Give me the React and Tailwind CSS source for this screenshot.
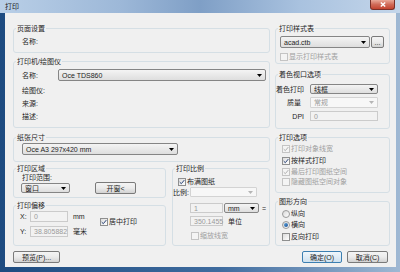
import React from "react";

/**
 * Print dialog (AutoCAD style, Windows 7 Aero frame)
 */

const Arrow = ({ disabled }) => (
  <svg width="5" height="3" viewBox="0 0 5 3" className="shrink-0">
    <polygon points="0,0 5,0 2.5,3" fill={disabled ? "#b5b5b5" : "#000"} />
  </svg>
);

const Check = ({ checked, disabled }) => (
  <span
    className={`flex h-[8px] w-[8px] shrink-0 items-center justify-center border ${
      disabled
        ? "border-[#c4c4c4] bg-[#f4f4f4]"
        : "border-[#8e8f8f] bg-gradient-to-br from-[#dcdcdc] to-white"
    }`}
  >
    {checked && (
      <svg width="6" height="6" viewBox="0 0 6 6">
        <path
          d="M0.7 3.1 L2.3 4.7 L5.3 1.1"
          stroke={disabled ? "#b0b0b0" : "#2a4478"}
          strokeWidth="1"
          fill="none"
        />
      </svg>
    )}
  </span>
);

const Radio = ({ checked }) => (
  <span className="flex h-[8px] w-[8px] shrink-0 items-center justify-center rounded-full border border-[#9a9a9a] bg-gradient-to-br from-[#d8d8d8] to-white">
    {checked && <span className="h-[4px] w-[4px] rounded-full bg-gradient-to-br from-[#5ea6e0] to-[#1c4f91]" />}
  </span>
);

const Combo = ({ value, className = "" }) => (
  <div
    className={`flex items-center rounded-[2px] border border-[#858585] bg-gradient-to-b from-[#f4f4f4] to-[#dedede] pl-[3px] pr-[3px] ${className}`}
  >
    <span className="flex-1 whitespace-nowrap leading-none">{value}</span>
    <Arrow />
  </div>
);

const DisabledCombo = ({ value, className = "" }) => (
  <div
    className={`flex items-center rounded-[1px] border border-[#d3d3d3] bg-[#f7f7f7] pl-[3px] pr-[3px] text-[#9a9a9a] ${className}`}
  >
    <span className="flex-1 whitespace-nowrap leading-none">{value}</span>
    <Arrow disabled />
  </div>
);

const Field = ({ value, className = "" }) => (
  <div
    className={`flex items-center border border-[#cbcbcb] bg-[#f2f2f2] pl-[3px] text-[#9a9a9a] ${className}`}
  >
    <span className="whitespace-nowrap leading-none">{value}</span>
  </div>
);

const Button = ({ children, className = "", primary }) => (
  <button
    className={`flex h-[12px] items-center justify-center rounded-[2px] border bg-gradient-to-b leading-none ${
      primary
        ? "border-[#3c7fb1] from-[#f0f7fc] to-[#cfe1ef]"
        : "border-[#7a7a7a] from-[#f4f4f4] via-[#ebebeb] to-[#d2d2d2]"
    } ${className}`}
  >
    {children}
  </button>
);

const Group = ({ title, className = "", children }) => (
  <fieldset className={`min-w-0 rounded-[3px] border border-[#d5dfe5] ${className}`}>
    <legend className="ml-[2px] px-[1px] leading-[9px]">{title}</legend>
    {children}
  </fieldset>
);

const CheckRow = ({ label, checked, disabled, className = "" }) => (
  <div className={`flex h-[9px] items-center gap-[1px] ${className}`}>
    <Check checked={checked} disabled={disabled} />
    <span className={disabled ? "text-[#a0a0a0]" : ""}>{label}</span>
  </div>
);

export default function App() {
  return (
    <div className="flex h-[272px] w-[400px] flex-col bg-[linear-gradient(to_right,#1d4b80,#3f6c9f_55%,#9fb8d3)] font-['Liberation_Sans','Noto_Sans_CJK_SC',sans-serif] text-[7px] leading-[9px] text-[#1e1e1e]">
      {/* Title bar */}
      <div className="flex h-[13px] items-start bg-[linear-gradient(to_right,#b9cfe7,#9db8d8_30%,#7f9fc6_50%,#a9c2df_75%,#c4d6ea)]">
        <span className="ml-[5px] mt-[2px] flex-1 text-[#1a1a1a]">打印</span>
        <div className="mr-[5px] flex h-[10px] w-[25px] items-center justify-center rounded-b-[3px] border border-t-0 border-[#7a3028] bg-gradient-to-b from-[#e9a899] via-[#d06a58] to-[#c4432f]">
          <svg width="6" height="5" viewBox="0 0 6 5">
            <path d="M0.8 0.5 L5.2 4.5 M5.2 0.5 L0.8 4.5" stroke="#fff" strokeWidth="1.4" />
          </svg>
        </div>
      </div>

      <div className="flex">
        <div className="w-[5px]" />
        {/* Client area */}
        <div className="flex h-[254px] w-[391px] gap-[5px] bg-[#f0f0f0] pl-[8px] pt-[11px]">
          {/* Left column */}
          <div className="flex w-[257px] flex-col">
            <Group title="页面设置" className="h-[29px]">
              <div className="mt-[4px] pl-[8px]">名称:</div>
            </Group>

            <Group title="打印机/绘图仪" className="mt-[4px] h-[71px]">
              <div className="mt-[3px] flex items-center pl-[8px]">
                <span className="w-[36px]">名称:</span>
                <Combo value="Oce TDS860" className="h-[12px] w-[208px]" />
              </div>
              <div className="mt-[5px] pl-[8px]">绘图仪:</div>
              <div className="mt-[4px] pl-[8px]">来源:</div>
              <div className="mt-[4px] pl-[8px]">描述:</div>
            </Group>

            <Group title="纸张尺寸" className="mt-[5px] h-[29px]">
              <Combo value="Oce A3 297x420 mm" className="ml-[8px] mt-[1px] h-[12px] w-[156px]" />
            </Group>

            <div className="mt-[2px] flex gap-[6px]">
              <div className="flex w-[153px] flex-col">
                <Group title="打印区域" className="h-[34px]">
                  <div className="pl-[8px]">打印范围:</div>
                  <div className="flex h-[12px] items-center pl-[7px]">
                    <Combo value="窗口" className="h-[10px] w-[49px]" />
                    <Button className="ml-[25px] w-[41px]">开窗&lt;</Button>
                  </div>
                </Group>

                <Group title="打印偏移" className="mt-[3px] h-[45px]">
                  <div className="flex">
                    <div className="flex w-[86px] flex-col pl-[6px]">
                      <div className="mt-[1px] flex h-[11px] items-center">
                        <span className="w-[10px]">X:</span>
                        <Field value="0" className="h-[11px] w-[38px]" />
                        <span className="ml-[5px]">mm</span>
                      </div>
                      <div className="mt-[4px] flex h-[11px] items-center">
                        <span className="w-[10px]">Y:</span>
                        <Field value="38.805882" className="h-[11px] w-[38px]" />
                        <span className="ml-[5px]">毫米</span>
                      </div>
                    </div>
                    <CheckRow label="居中打印" checked className="mt-[7px]" />
                  </div>
                </Group>
              </div>

              <Group title="打印比例" className="h-[82px] w-[98px]">
                <CheckRow label="布满图纸" checked className="mt-[4px] pl-[5px]" />
                <div className="mt-[1px] flex h-[10px] items-center">
                  <span className="w-[17px] whitespace-nowrap">比例:</span>
                  <DisabledCombo value="" className="h-[10px] w-[67px]" />
                </div>
                <div className="mt-[6px] flex h-[10px] items-center pl-[17px]">
                  <Field value="1" className="h-[10px] w-[33px]" />
                  <Combo value="mm" className="ml-[1px] h-[10px] w-[35px]" />
                  <span className="ml-[3px]">=</span>
                </div>
                <div className="mt-[3px] flex h-[10px] items-center pl-[17px]">
                  <Field value="350.1455" className="h-[10px] w-[33px]" />
                  <span className="ml-[5px]">单位</span>
                </div>
                <CheckRow label="缩放线宽" disabled className="mt-[5px] pl-[18px]" />
              </Group>
            </div>

            <Button className="mt-[5px] w-[47px]">预览(P)...</Button>
          </div>

          {/* Right column */}
          <div className="flex w-[115px] flex-col">
            <Group title="打印样式表" className="h-[40px]">
              <div className="mt-[3px] flex pl-[4px]">
                <Combo value="acad.ctb" className="h-[12px] w-[90px]" />
                <Button className="ml-[1px] w-[13px]">...</Button>
              </div>
              <CheckRow label="显示打印样式表" disabled className="mt-[4px] pl-[4px]" />
            </Group>

            <Group title="着色视口选项" className="mt-[6px] h-[59px]">
              <div className="mt-[5px] flex h-[10px] items-center">
                <span className="w-[28px] whitespace-nowrap text-right">着色打印</span>
                <Combo value="线框" className="ml-[6px] h-[10px] w-[68px]" />
              </div>
              <div className="mt-[3px] flex h-[11px] items-center">
                <span className="w-[28px] pr-[3px] text-right">质量</span>
                <DisabledCombo value="常规" className="ml-[6px] h-[11px] w-[68px]" />
              </div>
              <div className="mt-[3px] flex h-[10px] items-center">
                <span className="w-[28px] text-right">DPI</span>
                <Field value="0" className="ml-[6px] h-[10px] w-[68px]" />
              </div>
            </Group>

            <Group title="打印选项" className="mt-[4px] h-[60px]">
              <CheckRow label="打印对象线宽" checked disabled className="mt-[2px] pl-[6px]" />
              <CheckRow label="按样式打印" checked className="mt-[3px] pl-[6px]" />
              <CheckRow label="最后打印图纸空间" checked disabled className="mt-[2px] pl-[6px]" />
              <CheckRow label="隐藏图纸空间对象" disabled className="mt-[1px] pl-[6px]" />
            </Group>

            <Group title="图形方向" className="mt-[4px] h-[49px]">
              <div className="mt-[3px] flex h-[9px] items-center gap-[1px] pl-[6px]">
                <Radio />
                <span>纵向</span>
              </div>
              <div className="mt-[2px] flex h-[9px] items-center gap-[1px] pl-[6px]">
                <Radio checked />
                <span>横向</span>
              </div>
              <CheckRow label="反向打印" className="mt-[3px] pl-[6px]" />
            </Group>

            <div className="mt-[5px] flex justify-end gap-[5px] pr-[2px]">
              <Button primary className="w-[40px]">确定(O)</Button>
              <Button className="w-[41px]">取消(C)</Button>
            </div>
          </div>
        </div>
      </div>
    </div>
  );
}
